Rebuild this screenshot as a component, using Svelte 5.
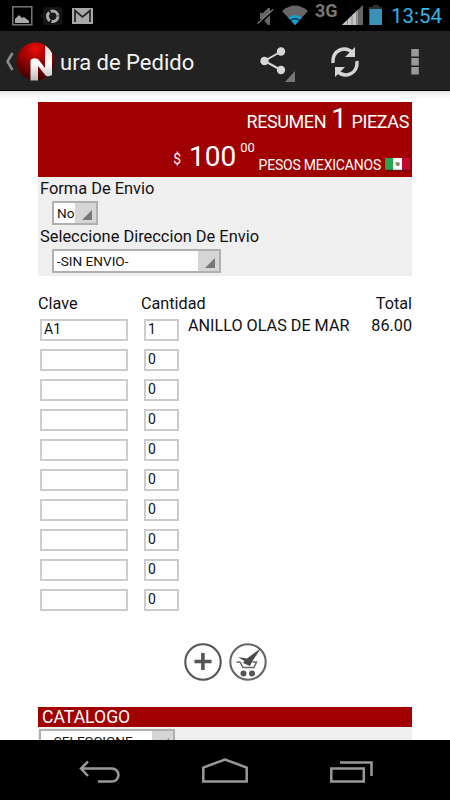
<script lang="ts">
  type Item = { clave: string; cantidad: number; nombre: string; total: string };

  let items: Item[] = [
    { clave: "A1", cantidad: 1, nombre: "ANILLO OLAS DE MAR", total: "86.00" },
    ...Array.from({ length: 9 }, () => ({
      clave: "",
      cantidad: 0,
      nombre: "",
      total: "",
    })),
  ];
</script>

<div class="screen">
  <div class="status">
    <svg class="notifications" width="96" height="31" viewBox="0 0 96 31">
      <rect x="12.8" y="6.8" width="19" height="18" fill="none" stroke="#777" stroke-width="1.5" />
      <path d="M15 23v-4l4-4 3 3 2-1 5 4v2z" fill="#aaa" />
      <rect x="43" y="7" width="19" height="18" rx="3" fill="#151515" />
      <circle cx="52.7" cy="16.3" r="5.2" fill="none" stroke="#aaa" stroke-width="3" stroke-dasharray="9.3 1.6" />
      <rect x="72" y="8" width="21" height="16" fill="#a8a8a8" />
      <path d="M75 22V10.5l7.5 6.5 7.5-6.5V22" fill="none" stroke="#222" stroke-width="1.7" />
    </svg>
    <svg class="signals" width="133" height="31" viewBox="0 0 133 31">
      <path d="M5 13h3l5-5h2v17h-2l-5-6H5z" fill="#666" />
      <path d="M3 25L19 10" stroke="#000" stroke-width="2" />
      <path d="M2.5 23.5L18 9.5" stroke="#777" stroke-width="1.5" />
      <path d="M27 11q13-11 26 0L40 25z" fill="#666" />
      <path d="M33 17.500q7-5 14 0L40 25z" fill="#169ed0" />
      <path d="M35 20.5q5-3.500 10 0" fill="none" stroke="#000" stroke-width="1" />
      <path d="M87 25L108 5v20z" fill="#666" />
      <path d="M87 25l15.500-15v15z" fill="#c5c5c5" />
      <path d="M92.5 20v5M97 16v9M101.500 12v13" stroke="#888" />
      <path d="M114 7h4V5h6v2h3v18h-13z" fill="#303030" />
      <rect x="114.5" y="9" width="12.500" height="16" fill="#3a91b6" />
      <text x="60" y="17" class="network">3G</text>
    </svg>
    <span class="clock">13:54</span>
  </div>

  <header>
    <svg class="logo" width="60" height="59" viewBox="0 0 60 59">
      <defs>
        <radialGradient id="ball" cx=".5" cy=".17" r=".75">
          <stop offset="0" stop-color="#f00d08" />
          <stop offset=".3" stop-color="#b80505" />
          <stop offset=".75" stop-color="#750000" />
          <stop offset="1" stop-color="#480000" />
        </radialGradient>
        <linearGradient id="ribbon" x1="0" y1="0" x2="0" y2="1">
          <stop offset="0" stop-color="#ddd" />
          <stop offset=".5" stop-color="#fff" />
          <stop offset="1" stop-color="#bbb" />
        </linearGradient>
      </defs>
      <path d="M12.5 22L7.5 30.5l5 8.500" fill="none" stroke="#8a8a8a" stroke-width="2.6" />
      <circle cx="35.5" cy="30.5" r="19" fill="url(#ball)" />
      <path d="M30.5 29q3-3 7.500-1l7 9V14.500q5 3 7 8V44q-3 2-6 1l-8-10v14.500h-7.500z" fill="url(#ribbon)" />
    </svg>
    <h1>ura de Pedido</h1>
    <svg class="actions" width="170" height="59" viewBox="0 0 170 59">
      <g fill="#d5d5d5" stroke="#d5d5d5">
        <path d="M21 20.5L4.500 30 21 39" fill="none" stroke-width="2" />
        <circle cx="4.5" cy="30" r="4.2" stroke="none" />
        <circle cx="21" cy="20.5" r="4.2" stroke="none" />
        <circle cx="21" cy="39" r="4.2" stroke="none" />
      </g>
      <path d="M35 40v11H25z" fill="#777" />
      <g fill="none" stroke="#d5d5d5" stroke-width="3.4">
        <path d="M73 32c-1-13 12-18 20-10" />
        <path d="M97 30c1 13-12 18-20 10" />
      </g>
      <path d="M95 16v10H85zM75 46V36h10z" fill="#d5d5d5" />
      <path d="M151.300 18h7.500v7.500h-7.500zM151.300 27h7.500v7.500h-7.500zM151.300 36h7.500v7.500h-7.500z" fill="#999" />
    </svg>
  </header>

  <main>
    <section class="summary">
      <p class="pieces">RESUMEN <b>1</b> PIEZAS</p>
      <p class="amount">
        <span class="sign">$</span>
        <span class="value">100</span>
        <sup>00</sup>
        <span class="currency">PESOS MEXICANOS</span>
        <svg width="25" height="13" viewBox="0 0 25 13">
          <path d="M0 0h8v12H0z" fill="#29a34d" />
          <path d="M8 0h9v12H8z" fill="#fff" />
          <path d="M17 0h8v12h-8z" fill="#c30830" />
          <path d="M10 5l2-1 3 1-1 3h-2z" fill="#8b8455" />
          <path d="M0 12.300h25" stroke="#3b1d1d" />
        </svg>
      </p>
    </section>

    <section class="shipping">
      <p class="forma">Forma De Envio</p>
      <div class="select short"><span>No</span><i></i></div>
      <p class="direccion">Seleccione Direccion De Envio</p>
      <div class="select long"><span>-SIN ENVIO-</span><i></i></div>
    </section>

    <div class="headings">
      <span class="clave">Clave</span>
      <span class="cantidad">Cantidad</span>
      <span>Total</span>
    </div>
    {#each items as item}
      <div class="row">
        <input class="key" bind:value={item.clave} />
        <input class="qty" bind:value={item.cantidad} />
        <span class="name">{item.nombre}</span>
        <span class="total">{item.total}</span>
      </div>
    {/each}

    <div class="buttons">
      <svg width="38" height="38" viewBox="0 0 38 38">
        <circle cx="19" cy="19" r="17.7" fill="#fff" stroke="#555" stroke-width="2.1" />
        <path d="M10.5 18.500h17M18.900 10v17" stroke="#555" stroke-width="3.6" />
      </svg>
      <svg width="38" height="38" viewBox="0 0 38 38">
        <circle cx="19" cy="19" r="17.7" fill="#fff" stroke="#666" stroke-width="2.1" />
        <path d="M7.5 19h3.500l3 5.500h11l2.500-5.500h-4" fill="none" stroke="#666" stroke-width="1.5" />
        <path d="M9 14l9 1.500L32 5 23.500 18l-2.500 5-7-3 1.500-2z" fill="#4a4a4a" />
        <circle cx="14.5" cy="30.5" r="3" fill="#555" />
        <circle cx="23" cy="30.5" r="3" fill="#555" />
      </svg>
    </div>

    <section class="catalog">
      <h2>CATALOGO</h2>
      <div class="select"><span>-SELECCIONE-</span><i></i></div>
    </section>
  </main>

  <nav>
    <svg width="450" height="60" viewBox="0 0 450 60" fill="none" stroke="#999" stroke-width="2.5">
      <path d="M88 21.500l-7 7 7 7.500M81 28.500h31a6.500 6.500 0 0 1 0 13H98" />
      <path d="M203.300 41.500v-14L225 19.500l21.700 8v14z" />
      <path d="M331.300 28.500h32.500v13h-32.500zM340 22.500h31.500V36" />
    </svg>
  </nav>
</div>

<style>
  :global(body) {
    margin: 0;
    overflow: hidden;
  }
  .screen {
    display: flex;
    flex-direction: column;
    width: 450px;
    height: 800px;
    overflow: hidden;
    background: #fff;
    color: #111;
    font-family: Roboto, sans-serif;
    font-size: 16.2px;
  }
  .screen * {
    box-sizing: border-box;
  }
  p,
  h1,
  h2 {
    margin: 0;
    font-weight: normal;
    white-space: nowrap;
  }
  svg {
    display: block;
    flex: none;
  }

  .status {
    display: flex;
    flex: none;
    height: 31px;
    background: #000;
  }
  .signals {
    margin-left: 159px;
  }
  .network {
    fill: #777;
    font-size: 18px;
    font-weight: bold;
  }
  .clock {
    margin-left: 3px;
    color: #33b5e5;
    font-size: 20.5px;
    line-height: 33px;
  }

  header {
    display: flex;
    flex: none;
    height: 60px;
    background: #222;
    border-bottom: 1px solid #000;
  }
  h1 {
    width: 200px;
    color: #f3f3f3;
    font-size: 22px;
    line-height: 63px;
  }

  main {
    flex: 1;
    min-height: 0;
    overflow: hidden;
    padding: 11px 38px 0 38px;
    background: linear-gradient(#e4e4e4, #fff 7px);
  }
  .summary {
    height: 75px;
    background: #a00000;
    color: #fff;
  }
  .pieces {
    height: 37px;
    padding-right: 3px;
    font-size: 18px;
    letter-spacing: -0.4px;
    line-height: 34px;
    text-align: right;
  }
  .pieces b {
    margin: 0 1px;
    font-size: 28px;
    font-weight: normal;
  }
  .amount {
    display: flex;
    align-items: baseline;
    justify-content: flex-end;
    height: 38px;
    padding-right: 2px;
  }
  .sign {
    position: relative;
    top: -2px;
    margin-right: 8px;
    font-size: 14px;
  }
  .value {
    margin-right: 4px;
    font-size: 28px;
    line-height: 36px;
  }
  sup {
    align-self: flex-start;
    margin-right: 4px;
    padding-top: 2px;
    font-size: 13px;
    letter-spacing: -0.2px;
    line-height: 14px;
  }
  .currency {
    position: relative;
    top: 4px;
    font-size: 14px;
    letter-spacing: -0.2px;
  }
  .amount svg {
    align-self: flex-start;
    margin: 19px 0 0 4px;
  }

  .shipping {
    height: 99px;
    padding-left: 2px;
    background: #efefef;
  }
  .shipping p {
    height: 24px;
    font-size: 16.4px;
    line-height: 23px;
  }
  .select {
    display: flex;
    height: 24px;
    background: #fff;
    border: 2px solid #b0b0b0;
    font-size: 13.6px;
    line-height: 20px;
  }
  .select span {
    flex: 1;
    padding-left: 3px;
    white-space: nowrap;
  }
  .select i {
    flex: none;
    width: 21px;
    background: #d5d5d5;
  }
  .select i::after {
    content: "";
    display: block;
    width: 10px;
    height: 10px;
    margin: 7px 0 0 7px;
    background: #777;
    clip-path: polygon(100% 0, 100% 100%, 0 100%);
  }
  .short {
    width: 46px;
    margin-left: 12px;
  }
  .long {
    width: 169px;
    margin-left: 12px;
  }

  .headings {
    display: flex;
    height: 40px;
    padding-top: 18px;
    line-height: 20px;
  }
  .clave {
    width: 103px;
  }
  .cantidad {
    flex: 1;
  }
  .row {
    display: flex;
    height: 30px;
    padding: 3px 0 0 2px;
  }
  input {
    height: 22px;
    padding: 0 2px 2px;
    border: 2px solid #ccc;
    border-radius: 0;
    outline: 0;
    background: #fff;
    color: #111;
    font: 14px Roboto, sans-serif;
  }
  .key {
    width: 88px;
    margin-right: 16px;
  }
  .qty {
    width: 35px;
    margin-right: 9px;
  }
  .name {
    flex: 1;
    line-height: 14px;
    white-space: nowrap;
  }
  .total {
    line-height: 14px;
  }

  .buttons {
    display: flex;
    gap: 7px;
    height: 91px;
    padding: 27px 0 0 145.5px;
  }
  .catalog {
    height: 70px;
    background: #efefef;
  }
  h2 {
    height: 20px;
    padding-left: 4px;
    background: #a00000;
    color: #fff;
    font-size: 17.6px;
    line-height: 20px;
  }
  .catalog .select {
    width: 136px;
    margin: 2px 0 0 1px;
  }
  .catalog span {
    padding-left: 9px;
  }

  nav {
    flex: none;
    height: 60px;
    background: #000;
  }
</style>
